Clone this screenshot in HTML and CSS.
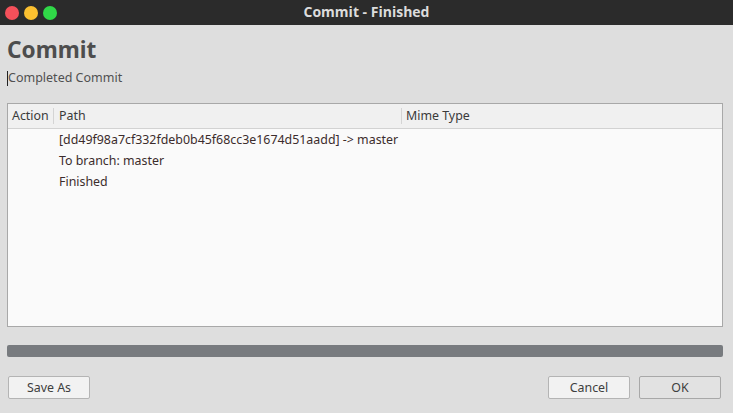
FILE: index.html
```html
<!DOCTYPE html>
<html>
<head>
<meta charset="utf-8">
<link rel="stylesheet" href="styles.css">
</head>
<body>
<div class="window">
  <div class="titlebar">
    <div class="lights">
      <span class="light red"></span>
      <span class="light yellow"></span>
      <span class="light green"></span>
    </div>
    <div class="title">Commit - Finished</div>
  </div>
  <div class="content">
    <h1 class="heading">Commit</h1>
    <div class="subtitle"><span class="caret"></span>Completed Commit</div>
    <div class="table">
      <div class="thead">
        <div class="th col-action">Action</div>
        <div class="th col-path">Path</div>
        <div class="th col-mime">Mime Type</div>
      </div>
      <div class="tbody">
        <div class="row"><div class="td col-action"></div><div class="td col-path">[dd49f98a7cf332fdeb0b45f68cc3e1674d51aadd] -&gt; master</div><div class="td col-mime"></div></div>
        <div class="row"><div class="td col-action"></div><div class="td col-path">To branch: master</div><div class="td col-mime"></div></div>
        <div class="row"><div class="td col-action"></div><div class="td col-path">Finished</div><div class="td col-mime"></div></div>
      </div>
    </div>
    <div class="progress"></div>
    <div class="buttons">
      <button class="btn">Save As</button>
      <div class="spacer"></div>
      <button class="btn">Cancel</button>
      <button class="btn btn-default">OK</button>
    </div>
  </div>
</div>
</body>
</html>
```

FILE: styles.css
```css
* { box-sizing: border-box; }
html, body { margin: 0; padding: 0; }
body {
  width: 733px;
  height: 413px;
  overflow: hidden;
  background: #dedede;
  font-family: "Noto Sans", "DejaVu Sans", sans-serif;
  color: #31363b;
}
.window { display: flex; flex-direction: column; height: 413px; }
.titlebar {
  height: 25px;
  background: #2b2b2b;
  display: flex;
  align-items: center;
  position: relative;
}
.lights { display: flex; gap: 5px; padding-left: 5px; position: relative; z-index: 1; }
.light { width: 14px; height: 14px; border-radius: 50%; display: block; }
.red { background: #f5505a; }
.yellow { background: #fbc030; }
.green { background: #30d848; }
.title {
  position: absolute;
  left: 0; right: 0; top: 0;
  text-align: center;
  line-height: 24px;
  color: #dcdcdc;
  font-weight: bold;
  font-size: 14px;
  font-family: "Open Sans", "Noto Sans", sans-serif;
}
.content { padding: 10px 10px 0 7px; display: flex; flex-direction: column; }
.heading {
  margin: 0;
  font-size: 22.6px;
  font-weight: bold;
  line-height: 30px;
  color: #4d4d4d;
}
.subtitle {
  font-size: 12.5px;
  line-height: 18px;
  margin-top: 4px;
  color: #505050;
  display: flex;
  align-items: center;
}
.caret { width: 1px; height: 15px; background: #222; display: block; }
.table {
  margin-top: 16px;
  height: 224px;
  border: 1px solid #a8a8a8;
  background: #fafafa;
  display: flex;
  flex-direction: column;
}
.thead {
  height: 25px;
  background: #f0f0f0;
  border-bottom: 1px solid #d2d2d2;
  display: flex;
  align-items: center;
}
.th {
  font-size: 12.4px;
  color: #3a3a3a;
  padding-left: 4px;
  line-height: 16px;
  border-right: 1px solid #d4d4d4;
}
.col-action { width: 46px; flex: none; }
.col-path { width: 348px; flex: none; }
.col-mime { flex: 1; }
.th.col-mime { border-right: none; }
.th.col-path { padding-left: 5px; }
.tbody { padding-top: 0; }
.row { display: flex; height: 21px; align-items: center; }
.td { font-size: 12.4px; color: #3c2c2c; padding-left: 5px; white-space: nowrap; }
.progress {
  margin-top: 18px;
  height: 12px;
  background: #787b7f;
  border-radius: 2px;
}
.buttons {
  margin-top: 19px;
  display: flex;
  align-items: center;
  padding-left: 1px;
}
.spacer { flex: 1; }
.btn {
  width: 82px;
  height: 23px;
  border: 1px solid #b4b4b4;
  border-radius: 2px;
  background: #f2f2f2;
  font-family: "Noto Sans", sans-serif;
  font-size: 12.4px;
  color: #3e3e3e;
  padding: 0;
  margin-left: 9px;
}
.btn:first-child { margin-left: 0; }
.btn-default { background: #e2e2e2; border-color: #a8a8a8; margin-right: 2px; }
```
